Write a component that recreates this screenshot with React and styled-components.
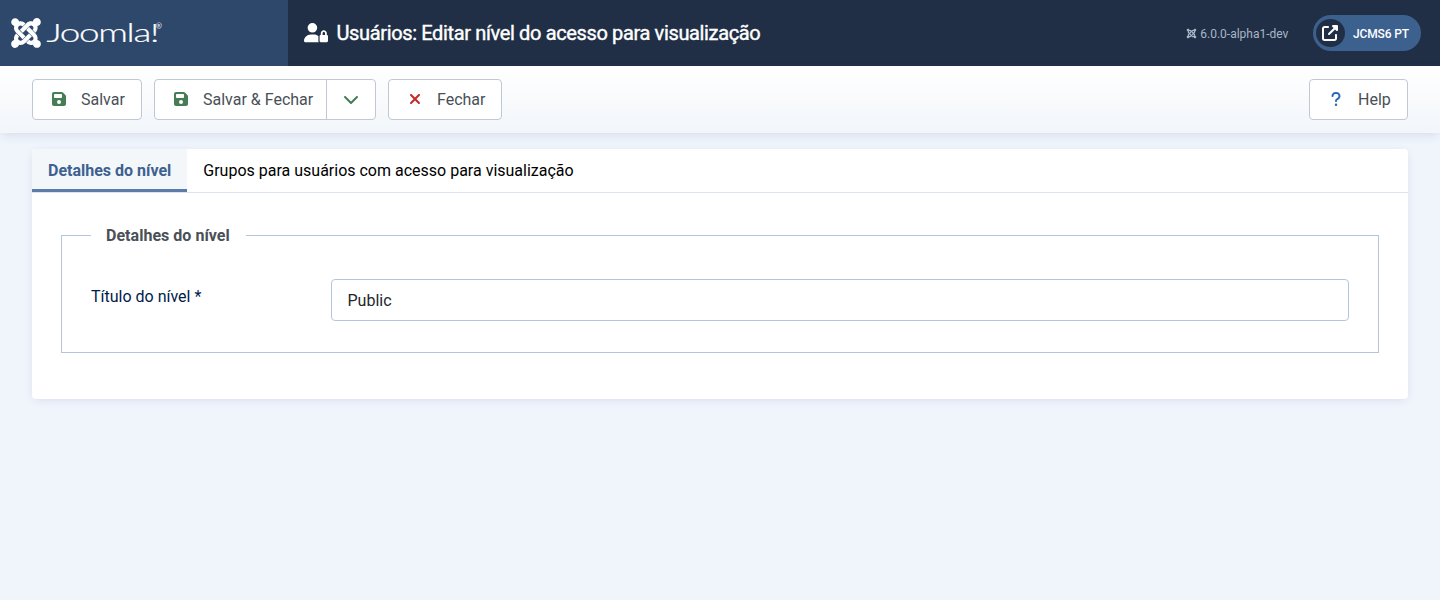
import React from 'react';
import styled, { createGlobalStyle } from 'styled-components';
import { FaJoomla } from 'react-icons/fa';
import {
  FaUserLock,
  FaFloppyDisk,
  FaChevronDown,
  FaXmark,
  FaQuestion,
  FaUpRightFromSquare,
} from 'react-icons/fa6';

const GlobalStyle = createGlobalStyle`
  *, *::before, *::after { box-sizing: border-box; }
  body {
    margin: 0;
    min-height: 100vh;
    background: #f0f4fb;
    color: #22262a;
    font-family: Roboto, "Liberation Sans", sans-serif;
    font-size: 16px;
    line-height: 24px;
    -webkit-font-smoothing: antialiased;
  }
`;

const Header = styled.header`
  display: flex;
  height: 66px;
  background: #202f46;
  color: #fff;
`;

const LogoBar = styled.div`
  display: flex;
  align-items: center;
  width: 288px;
  padding-left: 11px;
  background: #2e486b;
`;

const LogoMark = styled(FaJoomla)`
  width: 30px;
  height: 34px;
`;

const Wordmark = styled.svg`
  width: 120px;
  height: 30px;
  margin-left: 4px;
  fill: #fff;
  stroke: #fff;
  font-family: Lato, sans-serif;
  font-weight: 300;
`;

const PageTitle = styled.h1`
  display: flex;
  align-items: center;
  gap: 8.5px;
  margin: 0;
  padding-left: 16px;
  font-size: 20px;
  font-weight: 400;
  letter-spacing: -0.36px;
  -webkit-text-stroke: 0.4px #fff;
  line-height: 24px;
  white-space: nowrap;
`;

const TitleIcon = styled(FaUserLock)`
  width: 24px;
  height: 19.2px;
`;

const HeaderItems = styled.div`
  display: flex;
  align-items: center;
  margin-left: auto;
  padding-right: 19px;
`;

const Version = styled.div`
  display: flex;
  align-items: center;
  gap: 3px;
  padding-top: 1px;
  margin-right: 24.5px;
  color: #a9b6c6;
  font-size: 12px;
`;

const SiteLink = styled.a`
  display: flex;
  align-items: center;
  height: 36px;
  padding: 0 12px 0 3px;
  gap: 8px;
  border-radius: 18px;
  background: #3d618f;
  font-size: 12px;
  font-weight: 500;
  letter-spacing: -0.12px;
`;

const SiteLinkLabel = styled.span`
  padding-top: 1px;
`;

const SiteLinkIcon = styled.span`
  display: grid;
  place-items: center;
  width: 29px;
  height: 28px;
  border-radius: 50%;
  background: #202f46;
`;

const Toolbar = styled.div`
  display: flex;
  align-items: flex-start;
  gap: 12px;
  height: 67px;
  padding: 13px 32px 0;
  background: linear-gradient(#fff, #f2f6fa);
  box-shadow: 0 3px 10px -2px rgba(45, 80, 150, 0.17);
`;

const ButtonGroup = styled.div`
  display: flex;
`;

const ToolButton = styled.button`
  display: flex;
  align-items: center;
  width: ${(p) => p.$width}px;
  height: 41px;
  padding: 0 0 0 ${(p) => p.$pad || 18}px;
  margin-left: ${(p) => (p.$end ? 'auto' : p.$joined === 'right' ? '-1px' : '0')};
  border: 1px solid #c0c8d6;
  border-radius: ${(p) =>
    p.$joined === 'left' ? '4px 0 0 4px' : p.$joined === 'right' ? '0 4px 4px 0' : '4px'};
  background: #fff;
  color: #495057;
  font: 400 16px/24px Roboto, sans-serif;
  white-space: nowrap;
`;

const ButtonIcon = styled.span`
  display: grid;
  place-items: center;
  width: 16px;
  margin-right: ${(p) => p.$gap ?? 14}px;
  padding-bottom: 1px;
  color: ${(p) => p.$color};
  font-size: 16px;
`;

const Card = styled.main`
  height: 250px;
  margin: 16px 32px 0;
  border-radius: 4px;
  background: #fff;
  box-shadow: 0 2px 10px -2px rgba(45, 80, 150, 0.15);
`;

const Tabs = styled.div`
  display: flex;
  height: 44px;
  border-bottom: 1px solid #dbe4f0;
  border-radius: 4px 4px 0 0;
  overflow: hidden;
`;

const Tab = styled.button`
  padding: 0 16px;
  border: 0;
  background: ${(p) => (p.$active ? '#f3f7fa' : 'transparent')};
  box-shadow: ${(p) => (p.$active ? 'inset 0 -3px #5b7ca9' : 'none')};
  color: ${(p) => (p.$active ? '#3d618f' : '#000')};
  font: ${(p) => (p.$active ? 700 : 400)} 16px/24px Roboto, sans-serif;
`;

const Fieldset = styled.fieldset`
  height: 130px;
  margin: 30px 29px 0;
  padding: 32px 29px 0;
  border: 1px solid #b4c6df;
`;

const Legend = styled.legend`
  height: 24px;
  padding: 1px 16px 0 15px;
  color: #495057;
  font-weight: 700;
  letter-spacing: 0.03px;
`;

const Field = styled.div`
  display: flex;
`;

const Label = styled.label`
  width: 240px;
  padding-top: 6px;
  color: #001b4c;
`;

const Input = styled.input`
  flex: 1;
  height: 42px;
  padding: 0 15.5px;
  border: 1px solid #b4c6df;
  border-radius: 4px;
  background: #fff;
  color: #22262a;
  font: 400 16px/24px Roboto, sans-serif;
`;

export default function App() {
  return (
    <>
      <GlobalStyle />
      <Header>
        <LogoBar>
          <LogoMark />
          <Wordmark viewBox="0 0 120 30">
            <text x="1.5" y="24.3" fontSize="25" strokeWidth="0.2" letterSpacing="-0.9" textLength="111.5" lengthAdjust="spacingAndGlyphs">Joomla!</text>
            <text x="111" y="11" fontSize="7" strokeWidth="0.1">®</text>
          </Wordmark>
        </LogoBar>
        <PageTitle>
          <TitleIcon />
          Usuários: Editar nível do acesso para visualização
        </PageTitle>
        <HeaderItems>
          <Version>
            <FaJoomla size="11" />
            6.0.0-alpha1-dev
          </Version>
          <SiteLink>
            <SiteLinkIcon>
              <FaUpRightFromSquare size="16" />
            </SiteLinkIcon>
            <SiteLinkLabel>JCMS6 PT</SiteLinkLabel>
          </SiteLink>
        </HeaderItems>
      </Header>
      <Toolbar>
        <ToolButton $width={110}>
          <ButtonIcon $color="#457d54"><FaFloppyDisk /></ButtonIcon>
          Salvar
        </ToolButton>
        <ButtonGroup>
          <ToolButton $width={173} $joined="left">
            <ButtonIcon $color="#457d54"><FaFloppyDisk /></ButtonIcon>
            Salvar &amp; Fechar
          </ToolButton>
          <ToolButton $width={50} $joined="right" $pad={16}>
            <ButtonIcon $color="#457d54" $gap={0}><FaChevronDown /></ButtonIcon>
          </ToolButton>
        </ButtonGroup>
        <ToolButton $width={114}>
          <ButtonIcon $color="#c52827"><FaXmark /></ButtonIcon>
          Fechar
        </ToolButton>
        <ToolButton $width={99} $end>
          <ButtonIcon $color="#2a69b8"><FaQuestion /></ButtonIcon>
          Help
        </ToolButton>
      </Toolbar>
      <Card>
        <Tabs>
          <Tab $active>Detalhes do nível</Tab>
          <Tab>Grupos para usuários com acesso para visualização</Tab>
        </Tabs>
        <Fieldset>
          <Legend>Detalhes do nível</Legend>
          <Field>
            <Label>Título do nível *</Label>
            <Input defaultValue="Public" />
          </Field>
        </Fieldset>
      </Card>
    </>
  );
}
